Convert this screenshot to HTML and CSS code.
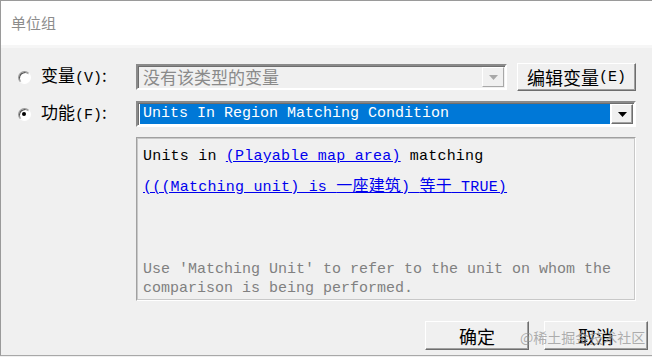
FILE: index.html
```html
<!DOCTYPE html>
<html>
<head>
<meta charset="utf-8">
<link rel="stylesheet" href="styles.css">
</head>
<body>
<div class="window">
  <div class="titlebar">单位组</div>
  <div class="sep"></div>
  <div class="content">
    <div class="row row1">
      <div class="choice">
        <span class="radio"></span>
        <span class="label">变量<span class="mono">(V)</span>:</span>
      </div>
      <div class="combo disabled">
        <span class="combo-text">没有该类型的变量</span>
        <span class="drop"><svg width="9" height="5" viewBox="0 0 9 5"><path d="M0 0H9L4.5 5Z" fill="#a8a8a8"/></svg></span>
      </div>
      <div class="btn edit">编辑变量<span class="mono">(E)</span></div>
    </div>
    <div class="row row2">
      <div class="choice">
        <span class="radio checked"></span>
        <span class="label">功能<span class="mono">(F)</span>:</span>
      </div>
      <div class="combo wide">
        <span class="combo-text selected">Units In Region Matching Condition</span>
        <span class="drop"><svg width="9" height="5" viewBox="0 0 9 5"><path d="M0 0H9L4.5 5Z" fill="#000"/></svg></span>
      </div>
    </div>
    <div class="row row3">
      <div class="textbox">
        <div class="line l1">Units in <a class="link">(Playable map area)</a> matching</div>
        <div class="line l2"><a class="link">(((Matching unit) is <span class="cjk">一座建筑</span>) <span class="cjk">等于</span> TRUE)</a></div>
        <div class="hint">Use 'Matching Unit' to refer to the unit on whom the comparison is being performed.</div>
      </div>
    </div>
    <div class="row buttons">
      <div class="btn action">确定</div>
      <div class="btn action">取消</div>
    </div>
  </div>
  <div class="watermark">@稀土掘金技术社区</div>
</div>
</body>
</html>
```

FILE: styles.css
```css
html, body {
  margin: 0;
  padding: 0;
  width: 652px;
  height: 357px;
  overflow: hidden;
  background: #f0f0f0;
}
.window {
  position: relative;
  width: 651px;
  height: 354px;
  border-top: 1px solid #9a9a9a;
  border-left: 1px solid #9a9a9a;
  border-bottom: 1px solid #a8a8a8;
  background: #f0f0f0;
  font-family: "Noto Sans CJK SC", sans-serif;
}
.titlebar {
  height: 44px;
  background: #fff;
  box-sizing: border-box;
  padding: 9px 0 0 10px;
  font-size: 15px;
  line-height: 26px;
  color: #8c8c8c;
}
.sep {
  height: 3px;
  background: #f6f6f6;
}
.content {
  display: flex;
  flex-direction: column;
  padding: 15px 0 0 0;
}
.mono {
  font-family: "Liberation Mono", monospace;
  font-size: 15px;
}
.row {
  display: flex;
  align-items: center;
}
.row1 { height: 28px; }
.row2 { height: 26px; margin-top: 10px; }
.row3 { margin-top: 10px; padding-left: 135px; }
.choice {
  width: 135px;
  display: flex;
  align-items: center;
}
.radio {
  width: 11px;
  height: 11px;
  margin-left: 17px;
  border-radius: 50%;
  border: 1px solid;
  border-color: #9a9a9a #fff #fff #9a9a9a;
  background: #fff;
  box-shadow: inset 1px 1px 0 #555;
  position: relative;
  flex: none;
}
.radio.checked::after {
  content: "";
  position: absolute;
  left: 3px;
  top: 3px;
  width: 4px;
  height: 4px;
  border-radius: 50%;
  background: #000;
}
.label {
  margin-left: 10px;
  font-size: 17px;
  line-height: 22px;
  color: #000;
}
.combo {
  width: 371px;
  height: 26px;
  box-sizing: border-box;
  border: 2px solid;
  border-color: #8a8a8a #fff #fff #8a8a8a;
  box-shadow: inset 1px 1px 0 #6e6e6e;
  display: flex;
  align-items: center;
  padding: 1px 1px 1px 2px;
  background: #f0f0f0;
}
.combo.wide { width: 500px; background: #fff; }
.combo-text {
  flex: 1;
  height: 20px;
  line-height: 20px;
  padding-left: 3px;
  font-size: 17px;
  color: #8a8a8a;
  white-space: nowrap;
}
.combo-text.selected {
  background: #0078d7;
  color: #fff;
  font-family: "Liberation Mono", monospace;
  font-size: 15px;
  letter-spacing: 0;
  overflow: hidden;
}
.drop {
  width: 22px;
  height: 20px;
  box-sizing: border-box;
  margin-left: 1px;
  background: #f0f0f0;
  border: 1px solid;
  border-color: #fff #6e6e6e #6e6e6e #fff;
  box-shadow: inset -1px -1px 0 #a0a0a0;
  display: flex;
  align-items: center;
  justify-content: center;
}
.disabled .drop { border-color: #fff #a8a8a8 #a8a8a8 #fff; box-shadow: none; }
.btn {
  box-sizing: border-box;
  background: #f0f0f0;
  border: 1px solid;
  border-color: #fff #6e6e6e #6e6e6e #fff;
  box-shadow: inset -1px -1px 0 #a0a0a0;
  display: flex;
  align-items: center;
  justify-content: center;
  color: #000;
  font-size: 18px;
}
.edit {
  width: 119px;
  height: 28px;
  margin-left: 10px;
}
.textbox {
  width: 500px;
  height: 164px;
  box-sizing: border-box;
  border: 1px solid;
  border-color: #a0a0a0 #fff #fff #a0a0a0;
  box-shadow: inset 1px 1px 0 #c8c8c8, inset -1px -1px 0 #c8c8c8;
  padding: 8px 6px 0 6px;
  font-family: "Liberation Mono", monospace;
  font-size: 15px;
  letter-spacing: 0.2px;
  color: #000;
}
.line { line-height: 22px; height: 22px; white-space: nowrap; }
.l2 { margin-top: 5px; }
.link { color: #0000ee; text-decoration: underline; }
.cjk { font-family: "Noto Sans CJK SC", sans-serif; font-size: 16px; }
.hint {
  margin-top: 65px;
  color: #808080;
  line-height: 19px;
  width: 488px;
  letter-spacing: 0;
}
.buttons {
  margin-top: 20px;
  justify-content: flex-end;
  gap: 15px;
  padding-right: 4px;
}
.action {
  width: 104px;
  height: 29px;
  font-size: 18px;
}
.watermark {
  position: absolute;
  left: 519px;
  top: 326px;
  font-size: 14px;
  color: rgba(150,150,150,0.75);
  white-space: nowrap;
}
```
